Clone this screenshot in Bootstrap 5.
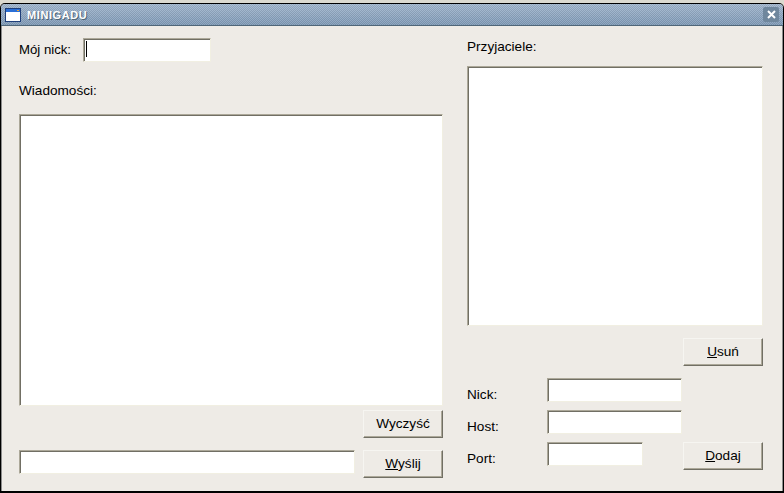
<!DOCTYPE html>
<html lang="pl">
<head>
  <meta charset="UTF-8" />
  <meta name="viewport" content="width=device-width, initial-scale=1" />
  <title>MINIGADU</title>
  <link href="https://cdn.jsdelivr.net/npm/bootstrap@5.3.3/dist/css/bootstrap.min.css" rel="stylesheet">
  <style>
    body {
      background-color: #dcdad0;
      font-family: "Liberation Sans", Arial, sans-serif;
      font-size: 13.6px;
      color: #000;
      overflow: hidden;
    }
    .app-window {
      margin-top: 3px;
      height: 490px;
      background-color: #eeebe6;
      border: 1px solid #000;
      border-bottom-width: 2px;
      border-radius: 5px 5px 0 0;
      box-shadow: inset 1px 0 0 #8c8c8c, inset -1px 0 0 #8c8c8c;
      overflow: hidden;
    }
    .title-strip {
      height: 22px;
      padding: 0 4px 0 4px;
      border-bottom: 1px solid #4f6678;
      background:
        repeating-conic-gradient(rgba(255,255,255,.09) 0 25%, rgba(0,0,0,.09) 0 50%) 0 0 / 2px 2px,
        linear-gradient(#a5bad1, #829dba);
    }
    .title-text {
      margin-left: 6px;
      padding-top: 1px;
      color: #fff;
      font-size: 11px;
      font-weight: 700;
      letter-spacing: .6px;
      text-shadow: 1px 1px 0 #4f6678;
    }
    .close-box {
      width: 16px;
      height: 15px;
      padding: 0;
      border: 0;
      border-radius: 2px;
      background-color: #6f879d;
      line-height: 0;
    }
    .work-area { padding: 12px 20px 0 18px; }
    .left-side { width: 424px; margin-right: 24px; }
    .right-side { width: 296px; }
    .nick-label { width: 64px; font-size: 13.2px; }
    .text-label { height: 20px; line-height: 20px; }
    .friends-label { height: 18px; line-height: 18px; margin-bottom: 10px; }
    .messages-label { margin: 19px 0 13px; }
    .win-field {
      display: block;
      padding: 0 2px;
      height: 24px;
      font-size: 13px;
      background-color: #fff;
      border-style: solid;
      border-width: 1px;
      border-color: #aca899 #f1efe2 #f1efe2 #aca899;
      border-radius: 0;
      box-shadow: inset 1px 1px 0 #716f64;
      resize: none;
    }
    .nick-field { width: 128px; }
    .messages-box { width: 424px; height: 292px; }
    .message-field { width: 336px; }
    .friends-box { width: 296px; height: 260px; }
    .long-field { width: 135px; }
    .port-field { width: 96px; }
    .caret-mark {
      position: absolute;
      left: 3px;
      top: 3px;
      width: 1px;
      height: 16px;
      background-color: #000;
    }
    .win-btn {
      width: 80px;
      height: 28px;
      padding: 0;
      font-size: 13.6px;
      color: #000;
      background-color: #eeebe6;
      border-style: solid;
      border-width: 1px;
      border-color: #f6f5f1 #716f64 #716f64 #f6f5f1;
      border-radius: 0;
      box-shadow: inset -1px -1px 0 #aca899;
    }
    .field-label { width: 80px; height: 24px; padding-top: 7px; line-height: 20px; }
    .clear-btn { margin-top: 4px; }
    .send-row { margin-top: 12px; }
    .remove-btn { margin-top: 12px; margin-bottom: 12px; }
  </style>
</head>
<body>
  <div class="app-window">
    <div class="title-strip d-flex align-items-center">
      <svg width="16" height="14" viewBox="0 0 16 14" aria-hidden="true">
        <rect x="0.5" y="0.5" width="15" height="13" fill="#fff" stroke="#1f3f7a"/>
        <rect x="1" y="1" width="14" height="3" fill="#2b6fd6"/>
        <rect x="12" y="2" width="2" height="1" fill="#e8a33a"/>
      </svg>
      <span class="title-text">MINIGADU</span>
      <button type="button" class="close-box ms-auto" aria-label="Zamknij">
        <svg width="9" height="9" viewBox="0 0 9 9" aria-hidden="true">
          <path d="M1 1l7 7M8 1L1 8" stroke="#fff" stroke-width="2" fill="none"/>
        </svg>
      </button>
    </div>

    <div class="work-area d-flex">
      <div class="left-side">
        <div class="d-flex align-items-center">
          <label class="nick-label" for="nick">Mój nick:</label>
          <div class="position-relative">
            <input type="text" id="nick" class="form-control win-field nick-field">
            <span class="caret-mark"></span>
          </div>
        </div>
        <div class="text-label messages-label">Wiadomości:</div>
        <textarea class="form-control win-field messages-box" aria-label="Wiadomości"></textarea>
        <div class="d-flex justify-content-end">
          <button type="button" class="btn win-btn clear-btn">Wyczyść</button>
        </div>
        <div class="send-row d-flex justify-content-between">
          <input type="text" class="form-control win-field message-field" aria-label="Wiadomość">
          <button type="button" class="btn win-btn"><u>W</u>yślij</button>
        </div>
      </div>

      <div class="right-side">
        <div class="friends-label">Przyjaciele:</div>
        <select multiple class="form-select win-field friends-box" aria-label="Przyjaciele"></select>
        <div class="d-flex justify-content-end">
          <button type="button" class="btn win-btn remove-btn"><u>U</u>suń</button>
        </div>
        <div class="d-flex mb-2">
          <label class="field-label" for="friend-nick">Nick:</label>
          <input type="text" id="friend-nick" class="form-control win-field long-field">
        </div>
        <div class="d-flex mb-2">
          <label class="field-label" for="friend-host">Host:</label>
          <input type="text" id="friend-host" class="form-control win-field long-field">
        </div>
        <div class="d-flex">
          <label class="field-label" for="friend-port">Port:</label>
          <input type="text" id="friend-port" class="form-control win-field port-field">
          <button type="button" class="btn win-btn ms-auto"><u>D</u>odaj</button>
        </div>
      </div>
    </div>
  </div>

  <script src="https://cdn.jsdelivr.net/npm/bootstrap@5.3.3/dist/js/bootstrap.bundle.min.js"></script>
</body>
</html>
